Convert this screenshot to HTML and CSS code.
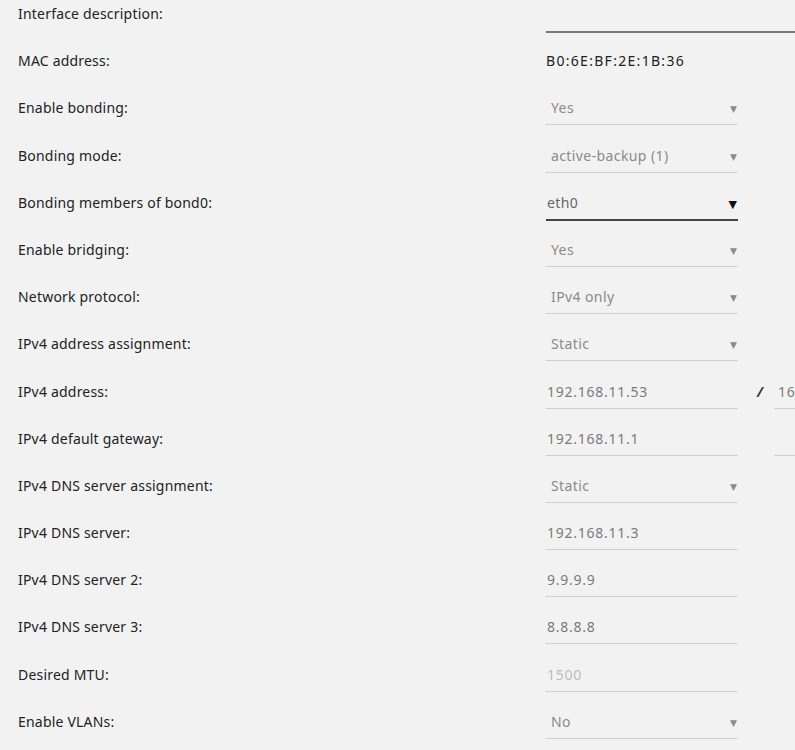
FILE: index.html
```html
<!DOCTYPE html>
<html lang="en">
<head>
    <meta charset="UTF-8">
    <title>Interface settings</title>
    <link rel="stylesheet" href="styles.css">
</head>
<body>
    <div class="form">
        <div class="row">
            <label>Interface description:</label>
            <div class="field wide dark"><span class="val"></span></div>
        </div>
        <div class="row">
            <label>MAC address:</label>
            <div class="plain">B0:6E:BF:2E:1B:36</div>
        </div>
        <div class="row">
            <label>Enable bonding:</label>
            <div class="field select"><span class="val">Yes</span><span class="arrow">▼</span></div>
        </div>
        <div class="row">
            <label>Bonding mode:</label>
            <div class="field select"><span class="val">active-backup (1)</span><span class="arrow">▼</span></div>
        </div>
        <div class="row">
            <label>Bonding members of bond0:</label>
            <div class="field select active"><span class="val">eth0</span><span class="arrow">▼</span></div>
        </div>
        <div class="row">
            <label>Enable bridging:</label>
            <div class="field select"><span class="val">Yes</span><span class="arrow">▼</span></div>
        </div>
        <div class="row">
            <label>Network protocol:</label>
            <div class="field select"><span class="val">IPv4 only</span><span class="arrow">▼</span></div>
        </div>
        <div class="row">
            <label>IPv4 address assignment:</label>
            <div class="field select"><span class="val">Static</span><span class="arrow">▼</span></div>
        </div>
        <div class="row">
            <label>IPv4 address:</label>
            <div class="field"><span class="val">192.168.11.53</span></div>
            <span class="slash">/</span>
            <div class="field extra"><span class="val">16</span></div>
        </div>
        <div class="row">
            <label>IPv4 default gateway:</label>
            <div class="field"><span class="val">192.168.11.1</span></div>
            <span class="slash"></span>
            <div class="field extra"><span class="val"></span></div>
        </div>
        <div class="row">
            <label>IPv4 DNS server assignment:</label>
            <div class="field select"><span class="val">Static</span><span class="arrow">▼</span></div>
        </div>
        <div class="row">
            <label>IPv4 DNS server:</label>
            <div class="field"><span class="val">192.168.11.3</span></div>
        </div>
        <div class="row">
            <label>IPv4 DNS server 2:</label>
            <div class="field"><span class="val">9.9.9.9</span></div>
        </div>
        <div class="row">
            <label>IPv4 DNS server 3:</label>
            <div class="field"><span class="val">8.8.8.8</span></div>
        </div>
        <div class="row">
            <label>Desired MTU:</label>
            <div class="field placeholder"><span class="val">1500</span></div>
        </div>
        <div class="row">
            <label>Enable VLANs:</label>
            <div class="field select"><span class="val">No</span><span class="arrow">▼</span></div>
        </div>
    </div>
</body>
</html>
```

FILE: styles.css
```css
body {
    margin: 0;
    background-color: #f2f2f2;
    font-family: "Noto Sans", "DejaVu Sans", sans-serif;
    font-size: 14px;
    color: #222;
    overflow: hidden;
}
.form {
    padding-left: 18px;
}
.row {
    display: flex;
    align-items: flex-start;
    height: 47.2px;
}
.row label {
    width: 528px;
    flex-shrink: 0;
    line-height: 28px;
    letter-spacing: 0.2px;
}
.plain {
    line-height: 28px;
    letter-spacing: 1.3px;
    padding-top: 33px;
    margin-top: -33px;
}
.field {
    width: 192px;
    flex-shrink: 0;
    height: 31px;
    box-sizing: border-box;
    border-bottom: 1px solid #d0d0d0;
    display: flex;
    justify-content: space-between;
    line-height: 28px;
    color: #7a7a7a;
    padding-left: 1px;
    letter-spacing: 0.75px;
}
.field.wide {
    width: 260px;
}
.field.dark {
    height: 33px;
    border-bottom: 2px solid #777;
}
.select .val {
    padding-left: 4px;
    color: #8a8a8a;
    letter-spacing: 0.4px;
}
.arrow {
    font-size: 9px;
    color: #8a8a8a;
    padding-right: 1px;
    line-height: 29px;
    letter-spacing: 0;
}
.field.active {
    height: 32px;
    border-bottom: 2px solid #444;
}
.field.active .val {
    padding-left: 0;
    color: #666;
}
.field.active .arrow {
    color: #111;
    font-size: 11px;
}
.placeholder {
    color: #bbb;
}
.slash {
    width: 36px;
    flex-shrink: 0;
    box-sizing: border-box;
    padding-left: 8px;
    text-align: center;
    line-height: 28px;
    color: #333;
    font-style: italic;
    font-weight: bold;
}
.field.extra {
    width: 60px;
    padding-left: 4px;
}
```
